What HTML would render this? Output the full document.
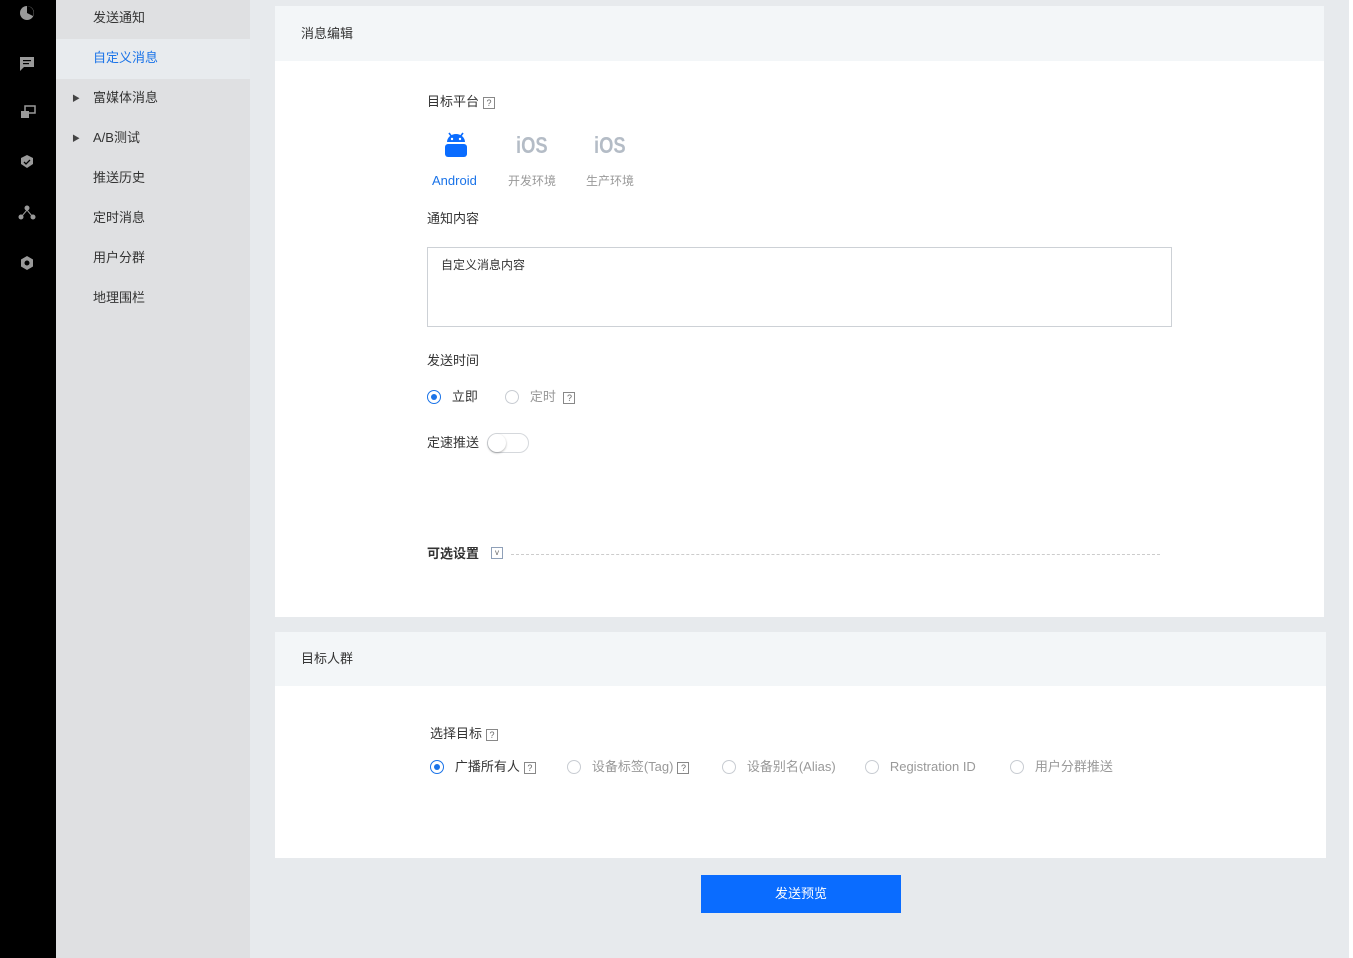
<!DOCTYPE html>
<html><head><meta charset="utf-8"><style>
*{margin:0;padding:0;box-sizing:border-box}
body{width:1353px;height:958px;position:relative;overflow:hidden;background:#e7eaed;font-family:"Liberation Sans","Noto Sans CJK SC",sans-serif;font-size:13px;color:#333;line-height:18px}
.abs{position:absolute}
.black{left:0;top:0;width:56px;height:958px;background:#000}
.side{left:56px;top:0;width:194px;height:958px;background:#dfe0e2}
.sel{left:56px;top:39px;width:194px;height:40px;background:#e8ebee}
.mi{position:absolute;left:93px;font-size:13px;color:#333}
.arr{position:absolute;left:72px;font-size:8px;color:#444}
.card{background:#fff}
.hdr{background:#f3f6f8;font-size:13px;color:#333;padding-left:26px;line-height:55px}
.q{display:inline-block;width:12px;height:12px;border:1px solid #888;font-size:9px;line-height:10px;text-align:center;color:#666;vertical-align:0px;margin-left:4px}
.radio{display:inline-block;width:14px;height:14px;border:1px solid #c8ccd2;border-radius:50%;vertical-align:-3px;position:relative}
.radio.on{border-color:#1a73e8}
.radio.on:after{content:"";position:absolute;left:3px;top:3px;width:6px;height:6px;border-radius:50%;background:#1a73e8}
.g{color:#999}
.ios{font-size:23px;font-weight:bold;color:#b4bcc6;transform:scaleX(0.8);transform-origin:left;line-height:28px}
</style></head><body>
<div class="abs black"></div>
<svg class="abs" style="left:0;top:0" width="56" height="280" fill="#9a9a9a">
<circle cx="27" cy="13" r="7"/><path d="M27 13 L27 6 A7 7 0 0 1 33 16 Z" fill="#000"/>
<path d="M20 57h14v10h-10l-4 4z"/><rect x="23" y="60" width="8" height="1.2" fill="#000"/><rect x="23" y="63" width="6" height="1.2" fill="#000"/>
<rect x="21" y="111" width="8" height="7"/><rect x="25" y="106" width="10" height="7" fill="none" stroke="#9a9a9a" stroke-width="1.5"/>
<path d="M27 155l6 3v6l-6 4-6-4v-6z"/><path d="M24 162l2 2 4-4" stroke="#000" stroke-width="1.3" fill="none"/>
<circle cx="27" cy="208" r="2.5"/><circle cx="21" cy="217" r="2.5"/><circle cx="33" cy="217" r="2.5"/><path d="M27 210l-5 6M27 210l5 6" stroke="#9a9a9a"/>
<path d="M27 256l6 3.5v7l-6 3.5-6-3.5v-7z"/><circle cx="27" cy="263" r="2.5" fill="#000"/>
</svg>
<div class="abs side"></div>
<div class="abs sel"></div>
<div class="mi" style="top:9px">发送通知</div>
<div class="mi" style="top:49px;color:#1a73e8">自定义消息</div>
<div class="arr" style="top:90px">▶</div><div class="mi" style="top:89px">富媒体消息</div>
<div class="arr" style="top:130px">▶</div><div class="mi" style="top:129px">A/B测试</div>
<div class="mi" style="top:169px">推送历史</div>
<div class="mi" style="top:209px">定时消息</div>
<div class="mi" style="top:249px">用户分群</div>
<div class="mi" style="top:289px">地理围栏</div>
<div class="abs" style="left:1349px;top:0;width:4px;height:958px;background:#fff"></div>

<div class="abs card" style="left:275px;top:6px;width:1049px;height:611px">
<div class="hdr">消息编辑</div>
</div>
<div class="abs" style="left:427px;top:93px">目标平台<span class="q">?</span></div>
<svg class="abs" style="left:443px;top:131px" width="26" height="28" fill="#0a6cff">
<path d="M4 11a9 8 0 0 1 18 0z"/><path d="M6 2l3 4M20 2l-3 4" stroke="#0a6cff" stroke-width="1.6"/>
<circle cx="9" cy="8" r="1.2" fill="#fff"/><circle cx="17" cy="8" r="1.2" fill="#fff"/>
<rect x="2" y="13" width="22" height="13" rx="3"/></svg>
<div class="abs" style="left:432px;top:172px;color:#1a73e8">Android</div>
<div class="abs ios" style="left:516px;top:131px">iOS</div>
<div class="abs ios" style="left:594px;top:131px">iOS</div>
<div class="abs g" style="left:508px;top:172px;font-size:12px">开发环境</div>
<div class="abs g" style="left:586px;top:172px;font-size:12px">生产环境</div>
<div class="abs" style="left:427px;top:210px">通知内容</div>
<div class="abs" style="left:427px;top:247px;width:745px;height:80px;border:1px solid #cdd1d6;padding:8px 13px;font-size:12px">自定义消息内容</div>
<div class="abs" style="left:427px;top:352px">发送时间</div>
<div class="abs" style="left:427px;top:388px"><span class="radio on"></span>&nbsp;&nbsp;&nbsp;立即</div>
<div class="abs g" style="left:505px;top:388px"><span class="radio"></span>&nbsp;&nbsp;&nbsp;定时 <span class="q">?</span></div>
<div class="abs" style="left:427px;top:434px">定速推送</div>
<div class="abs" style="left:487px;top:433px;width:42px;height:20px;border:1px solid #d5d8dc;border-radius:10px"><div style="width:18px;height:18px;border-radius:50%;background:#fff;box-shadow:0 1px 2px rgba(0,0,0,.3)"></div></div>
<div class="abs" style="left:427px;top:545px;font-weight:bold">可选设置</div>
<div class="abs" style="left:491px;top:547px;width:12px;height:12px;border:1px solid #8fa0b8;font-size:8px;line-height:10px;text-align:center;color:#666">v</div>
<div class="abs" style="left:511px;top:554px;width:649px;border-top:1px dashed #ccc"></div>

<div class="abs card" style="left:275px;top:632px;width:1051px;height:226px">
<div class="hdr" style="line-height:54px">目标人群</div>
</div>
<div class="abs" style="left:430px;top:725px">选择目标<span class="q">?</span></div>
<div class="abs" style="left:430px;top:758px"><span class="radio on"></span>&nbsp;&nbsp;&nbsp;广播所有人<span class="q">?</span></div>
<div class="abs g" style="left:567px;top:758px"><span class="radio"></span>&nbsp;&nbsp;&nbsp;设备标签(Tag)<span class="q">?</span></div>
<div class="abs g" style="left:722px;top:758px"><span class="radio"></span>&nbsp;&nbsp;&nbsp;设备别名(Alias)</div>
<div class="abs g" style="left:865px;top:758px"><span class="radio"></span>&nbsp;&nbsp;&nbsp;Registration ID</div>
<div class="abs g" style="left:1010px;top:758px"><span class="radio"></span>&nbsp;&nbsp;&nbsp;用户分群推送</div>

<div class="abs" style="left:701px;top:875px;width:200px;height:38px;background:#0a6cff;color:#fff;text-align:center;line-height:38px;font-size:13px">发送预览</div>
</body></html>
